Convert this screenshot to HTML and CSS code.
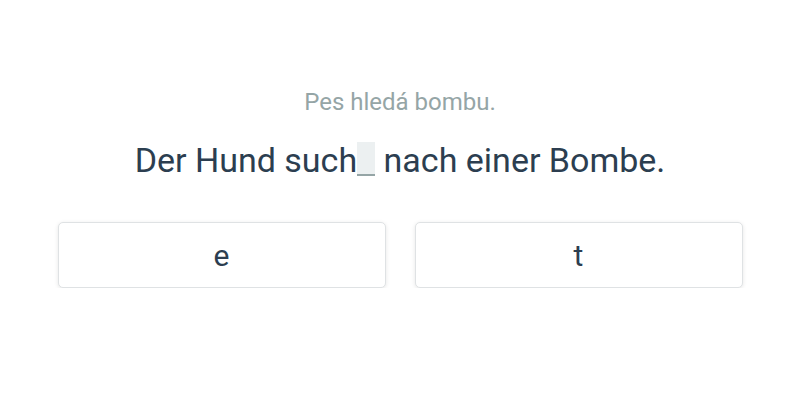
FILE: index.html
```html
<!DOCTYPE html>
<html lang="de">
<head>
<meta charset="utf-8">
<title>Exercise</title>
<link rel="stylesheet" href="styles.css">
</head>
<body>
<main class="exercise">
  <p class="translation">Pes hledá bombu.</p>
  <p class="sentence">Der Hund such<span class="blank"></span> nach einer Bombe.</p>
  <div class="choices">
    <button class="choice">e</button>
    <button class="choice">t</button>
  </div>
</main>
</body>
</html>
```
FILE: styles.css
```css
html, body {
  margin: 0;
  padding: 0;
  background: #ffffff;
}
body {
  font-family: Roboto, "Noto Sans", "Liberation Sans", sans-serif;
  color: #2c3e50;
}
.exercise {
  padding-top: 88px;
  display: flex;
  flex-direction: column;
  align-items: center;
}
.translation {
  margin: 0;
  font-size: 24px;
  line-height: 28px;
  color: #95a5a6;
}
.sentence {
  margin: 24px 0 0;
  font-size: 34px;
  line-height: 40px;
  color: #2c3e50;
}
.blank {
  display: inline-block;
  width: 18px;
  height: 32px;
  background: #ecf0f1;
  border-bottom: 2px solid #95a5a6;
  vertical-align: -4px;
}
.choices {
  margin-top: 42px;
  display: flex;
  gap: 29px;
}
.choice {
  width: 328px;
  height: 66px;
  background: #ffffff;
  border: 1px solid #dfe2e4;
  border-radius: 5px;
  box-shadow: 0 1px 4px rgba(0, 0, 0, 0.1);
  font-family: Roboto, "Noto Sans", "Liberation Sans", sans-serif;
  font-size: 30px;
  color: #2c3e50;
  padding: 0;
  cursor: pointer;
}
```
